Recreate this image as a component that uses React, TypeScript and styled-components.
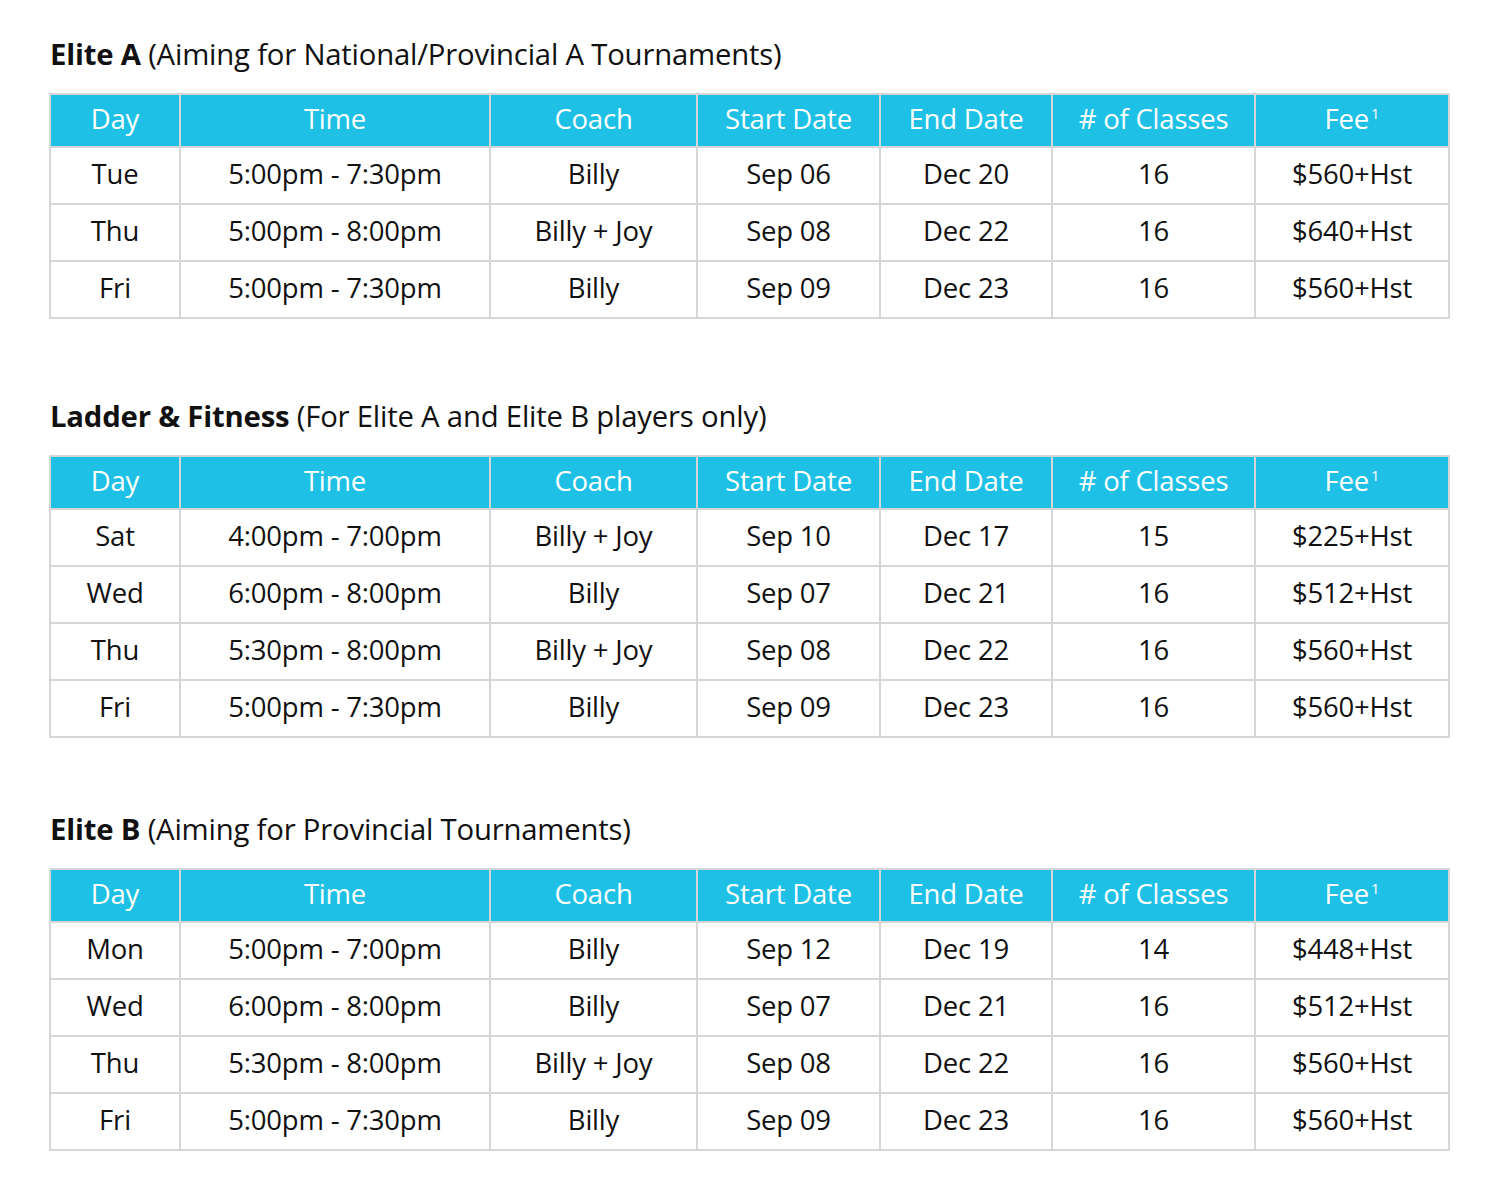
import React from 'react';
import styled, { createGlobalStyle } from 'styled-components';

const GlobalStyle = createGlobalStyle`
  html, body {
    margin: 0;
    padding: 0;
    background: #ffffff;
  }
  body {
    font-family: "Open Sans", "Noto Sans", sans-serif;
    color: #111111;
  }
`;

const Page = styled.div`
  width: 1500px;
  padding: 33px 0 0 49px;
  box-sizing: border-box;
`;

const Section = styled.section<{ $gap: number }>`
  margin-bottom: ${(p) => p.$gap}px;
`;

const Title = styled.h2`
  margin: 0 0 18px 1px;
  font-size: 29.3px;
  line-height: 42px;
  font-weight: 400;
  letter-spacing: -0.2px;
  color: #111;

  b {
    font-weight: 700;
  }
`;

const Table = styled.table`
  width: 1399px;
  border-collapse: collapse;
  table-layout: fixed;
  font-size: 27.5px;
  letter-spacing: -0.2px;
`;

const HeadCell = styled.th`
  height: 46px;
  padding: 0 0 5px;
  background: #1ec1e5;
  color: #ffffff;
  font-weight: 400;
  text-align: center;
  border: 2px solid #d6d6d6;
`;

const Cell = styled.td`
  height: 50px;
  padding: 0 0 5px;
  text-align: center;
  color: #111;
  border: 2px solid #d6d6d6;
`;

const Sup = styled.sup`
  font-size: 15px;
  vertical-align: 10px;
  margin-left: 2px;
`;

type Row = [string, string, string, string, string, string, string];

const widths = [130, 310, 207, 183, 172, 203, 194];
const heads = ['Day', 'Time', 'Coach', 'Start Date', 'End Date', '# of Classes', 'Fee'];

const sections: { bold: string; rest: string; gap: number; rows: Row[] }[] = [
  {
    bold: 'Elite A',
    rest: '(Aiming for National/Provincial A Tournaments)',
    gap: 76,
    rows: [
      ['Tue', '5:00pm - 7:30pm', 'Billy', 'Sep 06', 'Dec 20', '16', '$560+Hst'],
      ['Thu', '5:00pm - 8:00pm', 'Billy + Joy', 'Sep 08', 'Dec 22', '16', '$640+Hst'],
      ['Fri', '5:00pm - 7:30pm', 'Billy', 'Sep 09', 'Dec 23', '16', '$560+Hst'],
    ],
  },
  {
    bold: 'Ladder & Fitness',
    rest: '(For Elite A and Elite B players only)',
    gap: 70,
    rows: [
      ['Sat', '4:00pm - 7:00pm', 'Billy + Joy', 'Sep 10', 'Dec 17', '15', '$225+Hst'],
      ['Wed', '6:00pm - 8:00pm', 'Billy', 'Sep 07', 'Dec 21', '16', '$512+Hst'],
      ['Thu', '5:30pm - 8:00pm', 'Billy + Joy', 'Sep 08', 'Dec 22', '16', '$560+Hst'],
      ['Fri', '5:00pm - 7:30pm', 'Billy', 'Sep 09', 'Dec 23', '16', '$560+Hst'],
    ],
  },
  {
    bold: 'Elite B',
    rest: '(Aiming for Provincial Tournaments)',
    gap: 40,
    rows: [
      ['Mon', '5:00pm - 7:00pm', 'Billy', 'Sep 12', 'Dec 19', '14', '$448+Hst'],
      ['Wed', '6:00pm - 8:00pm', 'Billy', 'Sep 07', 'Dec 21', '16', '$512+Hst'],
      ['Thu', '5:30pm - 8:00pm', 'Billy + Joy', 'Sep 08', 'Dec 22', '16', '$560+Hst'],
      ['Fri', '5:00pm - 7:30pm', 'Billy', 'Sep 09', 'Dec 23', '16', '$560+Hst'],
    ],
  },
];

const Schedule = ({ rows }: { rows: Row[] }) => (
  <Table>
    <colgroup>
      {widths.map((w, i) => (
        <col key={i} style={{ width: w }} />
      ))}
    </colgroup>
    <thead>
      <tr>
        {heads.map((h) => (
          <HeadCell key={h}>
            {h}
            {h === 'Fee' && <Sup>1</Sup>}
          </HeadCell>
        ))}
      </tr>
    </thead>
    <tbody>
      {rows.map((r, i) => (
        <tr key={i}>
          {r.map((c, j) => (
            <Cell key={j}>{c}</Cell>
          ))}
        </tr>
      ))}
    </tbody>
  </Table>
);

export default function App() {
  return (
    <>
      <GlobalStyle />
      <Page>
        {sections.map((s) => (
          <Section key={s.bold} $gap={s.gap}>
            <Title>
              <b>{s.bold}</b> {s.rest}
            </Title>
            <Schedule rows={s.rows} />
          </Section>
        ))}
      </Page>
    </>
  );
}
